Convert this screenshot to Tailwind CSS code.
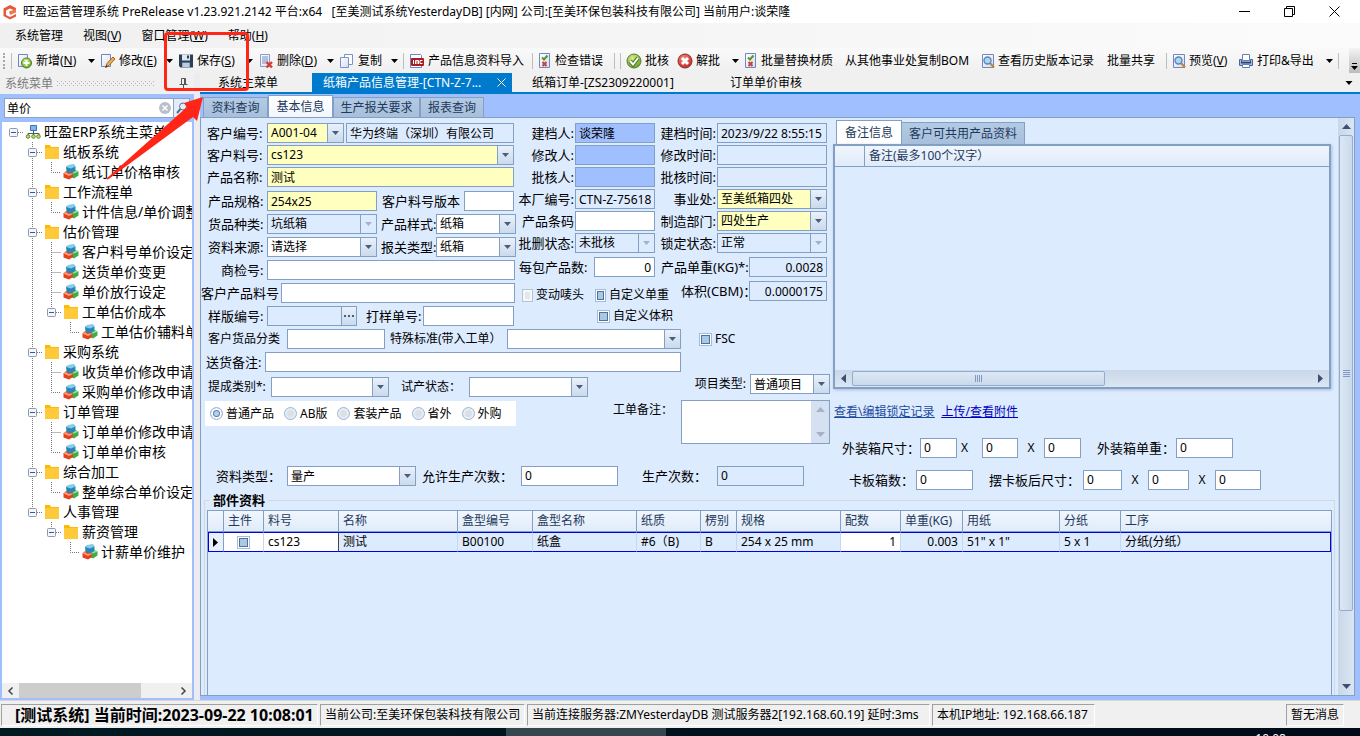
<!DOCTYPE html>
<html lang="zh-CN">

<head>
    <meta charset="UTF-8">
    <meta name="viewport" content="width=device-width, initial-scale=1.0">
    <title>旺盈运营管理系统</title>
    <script src="https://cdn.jsdelivr.net/npm/@tailwindcss/browser@4"></script>
</head>

<body class="bg-[#f0f0f0] text-black text-xs leading-4 font-['Noto_Sans','Noto_Sans_CJK_SC',sans-serif]">
    <!-- Shared icons -->
    <svg class="absolute size-0" xmlns="http://www.w3.org/2000/svg">
        <defs>
            <linearGradient id="gPaper" x1="0" y1="0" x2="1" y2="1">
                <stop offset="0" stop-color="#fff" />
                <stop offset="1" stop-color="#d3def2" />
            </linearGradient>
            <radialGradient id="gGreen" cx=".4" cy=".3" r=".8">
                <stop offset="0" stop-color="#d5ee86" />
                <stop offset="1" stop-color="#5a9a1e" />
            </radialGradient>
            <radialGradient id="gRed" cx=".4" cy=".3" r=".8">
                <stop offset="0" stop-color="#f58a82" />
                <stop offset="1" stop-color="#b81f1f" />
            </radialGradient>
        </defs>
        <symbol id="caret" viewBox="0 0 7 4"><path d="M0 0h7L3.500 4z" /></symbol>
        <symbol id="new" viewBox="0 0 16 16">
            <path d="M1.500 1.500h9v12h-9z" fill="url(#gPaper)" stroke="#6d86c0" />
            <circle cx="9.500" cy="10" r="5" fill="url(#gGreen)" stroke="#4c8220" />
            <path d="M9.500 7v6M6.500 10h6" stroke="#fff" stroke-width="2" />
        </symbol>
        <symbol id="edit" viewBox="0 0 16 16">
            <path d="M1.500 1.500h9v12h-9z" fill="url(#gPaper)" stroke="#6d86c0" />
            <path d="M5.500 14.500l1.500-4 6-6.500 2 2-6 6.500z" fill="#f2b04c" stroke="#9a6420" />
            <path d="M5.500 14.500l1-2.500 1.500 1.500z" fill="#333" />
        </symbol>
        <symbol id="save" viewBox="0 0 16 16">
            <path d="M1 1.500h14v13H2.500L1 13z" fill="#2b4055" />
            <path d="M4 1.500h8v6H4z" fill="#dfe8f2" />
            <path d="M9 2.500h2v3H9z" fill="#2b4055" />
            <path d="M4 9.500h8v5H4z" fill="#8fa9c4" />
            <path d="M5 11h6M5 13h6" stroke="#e9f0f7" />
        </symbol>
        <symbol id="del" viewBox="0 0 16 16">
            <path d="M2.500 1.500h9v12h-9z" fill="url(#gPaper)" stroke="#8c9cc6" />
            <path d="M4 4h6M4 6h6M4 8h6M4 10h4" stroke="#7b8fbd" />
            <path d="M8.500 9l5.500 5.500M14 9l-5.500 5.500" stroke="#d23c32" stroke-width="2.400" />
        </symbol>
        <symbol id="copy" viewBox="0 0 16 16">
            <path d="M5.500 1.500h8v10h-8z" fill="#fff" stroke="#7d92c8" />
            <path d="M1.500 4.500h8v10h-8z" fill="url(#gPaper)" stroke="#7d92c8" />
        </symbol>
        <symbol id="imc" viewBox="0 0 16 16">
            <path d="M1.500 1.500h10l1 1v12h-11z" fill="#fff" stroke="#6d86c0" />
            <rect x="2" y="5" width="13" height="8" rx="1" fill="#a51f22" />
            <path d="M4.500 7v4M6.500 11V7.500h3V11M8 7.500V11M13.500 7.500h-2.500v3h2.500" fill="none" stroke="#fff" />
        </symbol>
        <symbol id="check" viewBox="0 0 14 16">
            <path d="M1.500 .5h10v14h-10z" fill="url(#gPaper)" stroke="#7188c0" />
            <path d="M4 4.500l2 2 3.500-4" fill="none" stroke="#5d9427" stroke-width="2" />
            <path d="M4.500 9l4 4M8.500 9l-4 4" stroke="#c8433c" stroke-width="2" />
        </symbol>
        <symbol id="ok" viewBox="0 0 16 16">
            <circle cx="8" cy="8" r="7" fill="url(#gGreen)" stroke="#5c7d37" />
            <path d="M4 8l3 3.500 5-6.500" fill="none" stroke="#4f7a20" stroke-width="4" />
            <path d="M4 8l3 3.500 5-6.500" fill="none" stroke="#fff" stroke-width="2" />
        </symbol>
        <symbol id="no" viewBox="0 0 16 16">
            <circle cx="8" cy="8" r="7" fill="url(#gRed)" stroke="#93282a" />
            <path d="M5 5l6 6M11 5l-6 6" stroke="#fff" stroke-width="3" />
        </symbol>
        <symbol id="look" viewBox="0 0 14 16">
            <path d="M1.500 1.500h11v13h-11z" fill="url(#gPaper)" stroke="#7188c0" />
            <path d="M9 10l4 4.500" stroke="#c98132" stroke-width="2" />
            <circle cx="6.500" cy="7.500" r="3.500" fill="#a9d8f5" stroke="#5f86b5" stroke-width="1.400" />
        </symbol>
        <symbol id="print" viewBox="0 0 16 16">
            <path d="M4.500 1.500h7v6h-7z" fill="#fff" stroke="#6480b8" />
            <path d="M1.500 6.500h2v3h9v-3h2v6h-13z" fill="#a9bde0" stroke="#4a64a0" />
            <path d="M3 9.500h10" stroke="#2f4270" stroke-width="2" />
            <path d="M4.500 11.500h7v3h-7z" fill="#fff" stroke="#6480b8" />
        </symbol>
        <symbol id="root" viewBox="0 0 16 16">
            <path d="M5.500 1.500h6v5h-6z" fill="#7db7ef" stroke="#3a73b4" />
            <path d="M8.500 7v4M3 11V9.500h11V11" fill="none" stroke="#555" />
            <circle cx="3" cy="12.500" r="1.800" fill="#b9dc72" stroke="#5f8a22" />
            <circle cx="8.500" cy="12.500" r="1.800" fill="#b9dc72" stroke="#5f8a22" />
            <circle cx="13.500" cy="12.500" r="1.800" fill="#b9dc72" stroke="#5f8a22" />
        </symbol>
        <symbol id="folder" viewBox="0 0 16 16">
            <path d="M1 1h5l1 2h8v12H1z" fill="#ffb900" />
            <path d="M1 4h14v11H1z" fill="#ffca3a" />
        </symbol>
        <symbol id="leaf" viewBox="0 0 16 16">
            <path d="M8.500 8l4-2L15.500 7.500v4L11 14.500 8 13z" fill="#3fae49" />
            <path d="M8.500 8l4-2 3 1.500L11 9.500z" fill="#9be08a" />
            <path d="M.5 9.500l2-2L6 7l4 2v4l-4 2.500-5.500-2z" fill="#e2421f" />
            <path d="M.5 9.500L3 8l2.500 2L9 9l1 1-4 2z" fill="#ff9a6c" />
            <path d="M3 3l2.500-2L11 .500l1.500 2V7L8 9.500 3.500 8z" fill="#2a86b4" />
            <path d="M3 3l2.500-2L11 .500l1.500 2L8 4.500z" fill="#7fd0ee" />
        </symbol>
        <!-- Tree guides, one cell each -->
        <symbol id="g-line" viewBox="0 0 19 20"><path d="M9.500 0v20" stroke="#777" stroke-dasharray="1 1" /></symbol>
        <symbol id="g-tee" viewBox="0 0 19 20"><path d="M9.500 0v20M9.500 10.500h10" stroke="#777" stroke-dasharray="1 1" /></symbol>
        <symbol id="g-end" viewBox="0 0 19 20"><path d="M9.500 0v10.500h10" fill="none" stroke="#777" stroke-dasharray="1 1" /></symbol>
        <symbol id="g-box" viewBox="0 0 19 20">
            <path d="M14 10.500h5" stroke="#777" stroke-dasharray="1 1" />
            <rect x="5.500" y="6.500" width="8" height="8" rx="1" fill="#f4f6fa" stroke="#8e9aab" />
            <path d="M7 10.500h5" stroke="#3656b0" />
        </symbol>
        <symbol id="g-mid" viewBox="0 0 19 20">
            <path d="M9.500 0v20" stroke="#777" stroke-dasharray="1 1" />
            <use href="#g-box" width="19" height="20" />
        </symbol>
        <symbol id="g-last" viewBox="0 0 19 20">
            <path d="M9.500 0v6" stroke="#777" stroke-dasharray="1 1" />
            <use href="#g-box" width="19" height="20" />
        </symbol>
    </svg>

    <div class="relative flex min-h-screen flex-col">
        <!-- Title bar -->
        <header class="flex h-[23px] items-center bg-white">
            <svg class="ml-[2px] size-4" viewBox="0 0 16 16">
                <path d="M8 1l6 3v3L8 4.500 4 6.500v4.500l4 2 6-3v2.500L8 15.500 1.500 12V4.500z" fill="#e8573a" />
                <path d="M7 7.500l7-2.500v3.500L8 11z" fill="#f07a4c" />
            </svg>
            <h1 class="ml-[5px] whitespace-pre">旺盈运营管理系统 PreRelease v1.23.921.2142 平台:x64   [至美测试系统YesterdayDB] [内网] 公司:[至美环保包装科技有限公司] 当前用户:谈荣隆</h1>
            <div class="ml-auto flex h-full items-center">
                <button class="flex w-[45px] justify-center" aria-label="最小化"><svg class="size-[11px]" viewBox="0 0 11 11"><path d="M0 5.500h11" stroke="#000" /></svg></button>
                <button class="flex w-[45px] justify-center" aria-label="还原"><svg class="size-[11px]" viewBox="0 0 11 11"><path d="M.5 2.500h8v8h-8zM2.500 2.500v-2h8v8h-2" fill="none" stroke="#000" /></svg></button>
                <button class="mr-[3px] flex w-[45px] justify-center" aria-label="关闭"><svg class="size-[11px]" viewBox="0 0 11 11"><path d="M.5.5l10 10M10.500.5l-10 10" stroke="#000" /></svg></button>
            </div>
        </header>

        <!-- Menu bar -->
        <nav class="flex h-[25px] items-center gap-5 bg-linear-to-r from-[#f0f0f0] to-[#fbfbfb] pl-[15px]">
            <button>系统管理</button>
            <button>视图(<u>V</u>)</button>
            <button>窗口管理(<u>W</u>)</button>
            <button>帮助(<u>H</u>)</button>
        </nav>

        <!-- Toolbar -->
        <div class="flex h-[25px] items-center gap-[5px] bg-linear-to-b from-[#fafafa] to-[#efefef] pl-[3px] whitespace-nowrap [&_button]:flex [&_button]:items-center [&_button]:gap-[3px]">
            <span class="h-4 border-l-2 border-dotted border-[#a8a8a8]"></span>
            <span class="ml-px h-4 w-px bg-[#bdbdbd]"></span>
            <div class="flex w-[78px] items-center justify-between">
                <button><svg class="size-4"><use href="#new" /></svg><span>新增(<u>N</u>)</span></button>
                <svg class="h-1 w-[7px]"><use href="#caret" /></svg>
            </div>
            <div class="flex w-[73px] items-center justify-between">
                <button><svg class="size-4"><use href="#edit" /></svg><span>修改(<u>E</u>)</span></button>
                <svg class="h-1 w-[7px]"><use href="#caret" /></svg>
            </div>
            <div class="flex w-[75px] items-center justify-between">
                <button><svg class="size-4"><use href="#save" /></svg><span>保存(<u>S</u>)</span></button>
                <svg class="h-1 w-[7px]"><use href="#caret" /></svg>
            </div>
            <div class="flex w-[76px] items-center justify-between">
                <button><svg class="size-4"><use href="#del" /></svg><span>删除(<u>D</u>)</span></button>
                <svg class="h-1 w-[7px]"><use href="#caret" /></svg>
            </div>
            <div class="flex w-[59px] items-center justify-between">
                <button><svg class="size-4"><use href="#copy" /></svg>复制</button>
                <svg class="h-1 w-[7px]"><use href="#caret" /></svg>
            </div>
            <span class="h-4 w-px bg-[#bdbdbd]"></span>
            <button class="w-[118px]"><svg class="size-4"><use href="#imc" /></svg>产品信息资料导入</button>
            <span class="h-4 w-px bg-[#bdbdbd]"></span>
            <button class="w-[71px]"><svg class="h-4 w-[14px]"><use href="#check" /></svg>检查错误</button>
            <span class="h-4 w-px bg-[#bdbdbd]"></span>
            <span class="h-4 w-px bg-[#bdbdbd]"></span>
            <button class="w-[46px]"><svg class="size-4"><use href="#ok" /></svg>批核</button>
            <div class="flex w-[62px] items-center justify-between">
                <button><svg class="size-4"><use href="#no" /></svg>解批</button>
                <svg class="h-1 w-[7px]"><use href="#caret" /></svg>
            </div>
            <button class="w-[96px]"><svg class="h-4 w-[14px]"><use href="#check" /></svg>批量替换材质</button>
            <button class="w-[131px]">从其他事业处复制BOM</button>
            <button class="w-[121px]"><svg class="h-4 w-[14px]"><use href="#look" /></svg>查看历史版本记录</button>
            <button class="w-[54px]">批量共享</button>
            <span class="h-4 w-px bg-[#bdbdbd]"></span>
            <button class="w-[61px]"><svg class="h-4 w-[14px]"><use href="#look" /></svg><span>预览(<u>V</u>)</span></button>
            <div class="flex w-[95px] items-center justify-between">
                <button><svg class="size-4"><use href="#print" /></svg>打印&amp;导出</button>
                <svg class="h-1 w-[7px]"><use href="#caret" /></svg>
            </div>
            <span class="h-4 w-px bg-[#bdbdbd]"></span>
            <div class="ml-auto flex h-full w-[11px] flex-col items-center justify-end gap-[2px] bg-linear-to-b from-[#f4f4f4] to-[#bcbcbc] pb-[3px]">
                <span class="h-px w-[5px] bg-black"></span>
                <svg class="h-1 w-[7px]"><use href="#caret" /></svg>
            </div>
        </div>

        <div class="flex flex-1">
            <!-- Sidebar -->
            <aside class="flex w-[194px] shrink-0 flex-col">
                <div class="flex h-[21px] items-center gap-1 pl-[5px] text-[#7a7a7a]">
                    <span>系统菜单</span>
                    <svg class="h-[5px] w-[98px]"><path d="M0 .5h98M0 4.500h98" stroke="#b0b0b0" stroke-dasharray="1 3" /><path d="M2 2.500h96" stroke="#b0b0b0" stroke-dasharray="1 3" /></svg>
                    <svg class="ml-5 h-[11px] w-[9px]" viewBox="0 0 9 11"><path d="M2.500 6V.5h4V6M5.500 1v5M.5 6.500h8M4.500 7v4" fill="none" stroke="#555" /></svg>
                </div>
                <div class="flex flex-1 flex-col border-2 border-[#a0bfff] bg-white">
                    <div class="flex bg-[#a0bfff] px-[2px] pt-[2px] pb-1">
                        <div class="flex h-5 flex-1 items-center border border-[#8aa2c4] bg-white">
                            <input type="text" value="单价" aria-label="搜索菜单" class="h-full w-[154px] px-[2px] outline-none">
                            <svg class="size-3 shrink-0" viewBox="0 0 12 12"><circle cx="6" cy="6" r="6" fill="#b7bfca" /><path d="M3.500 3.500l5 5M8.500 3.500l-5 5" stroke="#fff" stroke-width="1.500" /></svg>
                            <button class="ml-auto flex h-full w-4 items-center justify-center border-l border-[#8aa2c4] bg-[#e3ecf8]" aria-label="搜索"><svg class="size-3" viewBox="0 0 12 12"><circle cx="7" cy="4.500" r="3.500" fill="none" stroke="#56708f" /><path d="M4.500 7L1 11" stroke="#56708f" stroke-width="2" /></svg></button>
                        </div>
                    </div>
                    <ul id="tree" class="flex-1 overflow-hidden pl-[2px] text-sm leading-5 whitespace-nowrap"></ul>
                    <div class="flex h-[15px] items-center bg-[#f0f0f0]">
                        <svg class="mx-1 h-2 w-[9px]" viewBox="0 0 9 8"><path d="M6.500.5L3 4l3.500 3.500" fill="none" stroke="#444" stroke-width="1.500" /></svg>
                        <span class="h-full w-[122px] bg-[#cdcdcd]"></span>
                        <svg class="mr-1 ml-auto h-2 w-[9px]" viewBox="0 0 9 8"><path d="M2.500.5L6 4 2.500 7.500" fill="none" stroke="#444" stroke-width="1.500" /></svg>
                    </div>
                </div>
            </aside>

            <div class="w-[6px] shrink-0 bg-[#ececf0]"></div>

            <main class="flex min-w-0 flex-1 flex-col">
                <!-- Document tabs -->
                <div class="flex h-[21px] items-stretch border-b-2 border-[#007acc] pr-[7px]">
                    <button class="w-[112px] pt-px pl-[18px] text-left">系统主菜单</button>
                    <div class="flex w-[200px] items-center justify-between bg-[#007acc] pr-[6px] pl-[11px] text-white">
                        <button class="pt-px">纸箱产品信息管理-[CTN-Z-7...</button>
                        <button aria-label="关闭标签"><svg class="size-[9px]" viewBox="0 0 9 9"><path d="M.5.5l8 8M8.500.5l-8 8" stroke="#fff" /></svg></button>
                    </div>
                    <button class="w-[198px] pt-px pl-5 text-left">纸箱订单-[ZS2309220001]</button>
                    <button class="pt-px pl-5">订单单价审核</button>
                    <svg class="ml-auto h-1 w-2 self-center"><use href="#caret" /></svg>
                </div>

                <div class="flex flex-1 flex-col bg-[#a0bfff] pr-[5px] pb-1">
                    <!-- Page tabs -->
                    <div class="flex h-[23px] items-end pl-[3px] text-[#1e395b] [&_button]:border [&_button]:border-b-0 [&_button]:border-[#839fc3]">
                        <button class="h-5 w-[65px] bg-linear-to-b from-[#b3cae4] to-[#a7bfdb]">资料查询</button>
                        <button class="h-[22px] w-[65px] bg-linear-to-b from-white to-[#f2f7ff]">基本信息</button>
                        <button class="h-5 w-[87px] bg-linear-to-b from-[#b3cae4] to-[#a7bfdb]">生产报关要求</button>
                        <button class="h-5 w-16 bg-linear-to-b from-[#b3cae4] to-[#a7bfdb]">报表查询</button>
                    </div>

                    <div class="flex flex-1 border border-[#839fc3] bg-[#ddebff]">
                        <form class="flex min-w-0 flex-1 flex-col whitespace-nowrap [&_[data-combo]]:flex [&_[data-combo]]:h-5 [&_[data-combo]]:shrink-0 [&_[data-combo]]:border [&_[data-combo]]:border-[#839fc3] [&_input]:outline-none [&_input[type=text]]:h-5 [&_input[type=text]]:border [&_input[type=text]]:border-[#839fc3] [&_input[type=text]]:px-[3px] [&_select]:min-w-0 [&_select]:flex-1 [&_select]:appearance-none [&_select]:px-[3px] [&_select]:opacity-100 [&_select]:outline-none">
                            <div class="flex">
                                <div class="w-[629px] shrink-0">
                                    <div class="flex pt-[5px]">
                                        <!-- Product fields -->
                                        <div class="w-[315px] text-[13px] leading-5 [&_input]:text-xs [&_select]:text-xs">
                                            <div class="flex flex-col gap-[2px]">
                                                <div class="flex">
                                                    <label for="custNo" class="w-[66px] shrink-0 pl-[6px]">客户编号:</label>
                                                    <div data-combo class="w-[77px] bg-[#ffffbf]"><select id="custNo"><option>A001-04</option></select></div>
                                                    <input type="text" aria-label="客户名称" readonly value="华为终端（深圳）有限公司" class="ml-[2px] w-[168px]">
                                                </div>
                                                <div class="flex">
                                                    <label for="custPart" class="w-[66px] shrink-0 pl-[6px]">客户料号:</label>
                                                    <div data-combo class="w-[247px] bg-[#ffffbf]"><select id="custPart"><option>cs123</option></select></div>
                                                </div>
                                                <div class="flex">
                                                    <label for="prodName" class="w-[66px] shrink-0 pl-[6px]">产品名称:</label>
                                                    <input type="text" id="prodName" value="测试" class="w-[247px] bg-[#ffffbf]">
                                                </div>
                                            </div>
                                            <div class="mt-1 flex flex-col gap-[3px]">
                                                <div class="flex">
                                                    <label for="spec" class="w-[66px] shrink-0 pl-[7px]">产品规格:</label>
                                                    <input type="text" id="spec" value="254x25" class="w-[110px] bg-[#ffffbf]">
                                                    <label for="partVer" class="w-[87px] pl-[5px]">客户料号版本</label>
                                                    <input type="text" id="partVer" class="w-[50px] bg-white">
                                                </div>
                                                <div class="flex">
                                                    <label for="kind" class="w-[66px] shrink-0 pl-[7px]">货品种类:</label>
                                                    <div data-combo class="w-[110px]"><select id="kind" disabled><option>坑纸箱</option></select></div>
                                                    <label for="style" class="w-[59px] pl-1">产品样式:</label>
                                                    <div data-combo class="w-20 bg-white"><select id="style"><option>纸箱</option></select></div>
                                                </div>
                                                <div class="flex">
                                                    <label for="source" class="w-[66px] shrink-0 pl-[7px]">资料来源:</label>
                                                    <div data-combo class="w-[110px] bg-white"><select id="source"><option>请选择</option></select></div>
                                                    <label for="customs" class="w-[59px] pl-1">报关类型:</label>
                                                    <div data-combo class="w-20 bg-white"><select id="customs"><option>纸箱</option></select></div>
                                                </div>
                                                <div class="flex">
                                                    <label for="inspect" class="w-[66px] shrink-0 pl-5">商检号:</label>
                                                    <input type="text" id="inspect" class="w-[248px] bg-white">
                                                </div>
                                                <div class="flex">
                                                    <label for="custProd" class="w-20 shrink-0">客户产品料号</label>
                                                    <input type="text" id="custProd" class="w-[234px] bg-white">
                                                </div>
                                                <div class="flex">
                                                    <label for="sample" class="w-[66px] shrink-0 pl-[7px]">样版编号:</label>
                                                    <input type="text" id="sample" readonly class="w-[75px]">
                                                    <button type="button" aria-label="选择样版" class="-ml-px flex h-5 w-4 items-center justify-center border border-[#839fc3] bg-linear-to-b from-[#e9f1fb] to-[#cbdaec]"><svg class="h-[2px] w-[10px]"><path d="M0 1h2M4 1h2M8 1h2" stroke="#4a5d7e" stroke-width="2" /></svg></button>
                                                    <label for="proof" class="w-[66px] pl-[9px]">打样单号:</label>
                                                    <input type="text" id="proof" class="w-[91px] bg-white">
                                                </div>
                                            </div>
                                        </div>

                                        <!-- Audit fields -->
                                        <div class="w-[314px] text-[13px] leading-5 [&_input]:text-xs [&_select]:text-xs">
                                            <div class="grid grid-cols-[58px_80px_60px_110px] gap-x-[1px] gap-y-[2px] [&_label]:text-right">
                                                <label for="maker">建档人:</label>
                                                <input type="text" id="maker" readonly value="谈荣隆" class="bg-[#a0bfff]">
                                                <label for="madeAt">建档时间:</label>
                                                <input type="text" id="madeAt" readonly value="2023/9/22 8:55:15">
                                                <label for="editor">修改人:</label>
                                                <input type="text" id="editor" readonly class="bg-[#a0bfff]">
                                                <label for="editedAt">修改时间:</label>
                                                <input type="text" id="editedAt" readonly>
                                                <label for="checker">批核人:</label>
                                                <input type="text" id="checker" readonly class="bg-[#a0bfff]">
                                                <label for="checkedAt">批核时间:</label>
                                                <input type="text" id="checkedAt" readonly>
                                                <label for="factNo">本厂编号:</label>
                                                <input type="text" id="factNo" readonly value="CTN-Z-75618">
                                                <label for="dept">事业处:</label>
                                                <div data-combo class="bg-[#ffffbf]"><select id="dept"><option>至美纸箱四处</option></select></div>
                                                <label for="barcode">产品条码</label>
                                                <input type="text" id="barcode" class="bg-white">
                                                <label for="mfg">制造部门:</label>
                                                <div data-combo class="bg-[#ffffbf]"><select id="mfg"><option>四处生产</option></select></div>
                                                <label for="state">批删状态:</label>
                                                <div data-combo><select id="state" disabled><option>未批核</option></select></div>
                                                <label for="lock">锁定状态:</label>
                                                <div data-combo><select id="lock" disabled><option>正常</option></select></div>
                                            </div>
                                            <div class="mt-1 flex flex-col gap-1">
                                                <div class="flex">
                                                    <label for="perPack" class="w-[78px] pl-[3px]">每包产品数:</label>
                                                    <input type="text" id="perPack" value="0" class="w-[61px] bg-white text-right">
                                                    <label for="weight" class="w-[94px] pl-[6px]">产品单重(KG)*:</label>
                                                    <input type="text" id="weight" readonly value="0.0028" class="w-[78px] text-right">
                                                </div>
                                                <div class="flex">
                                                    <div class="flex w-[161px] items-center gap-[3px] pt-[6px] pl-[6px] text-xs leading-4 [&_label]:mr-2">
                                                        <input type="checkbox" id="mark" disabled class="size-[13px] appearance-none border border-[#b3c3d8] bg-[#e4e6ea] shadow-[inset_0_0_0_2px_#f6f7f9]">
                                                        <label for="mark">变动唛头</label>
                                                        <input type="checkbox" id="ownWeight" class="size-[13px] appearance-none border border-[#a3bbdc] bg-[#a9c8e4] shadow-[inset_0_0_0_1px_#fff,inset_0_0_0_2px_#4f7299]">
                                                        <label for="ownWeight">自定义单重</label>
                                                    </div>
                                                    <label for="volume" class="w-[72px] pl-1">体积(CBM)：</label>
                                                    <input type="text" id="volume" readonly value="0.0000175" class="w-[78px] text-right">
                                                </div>
                                                <div class="flex h-[18px] items-center gap-[3px] pl-[81px] text-xs">
                                                    <input type="checkbox" id="ownVolume" class="size-[13px] appearance-none border border-[#a3bbdc] bg-[#a9c8e4] shadow-[inset_0_0_0_1px_#fff,inset_0_0_0_2px_#4f7299]">
                                                    <label for="ownVolume">自定义体积</label>
                                                </div>
                                            </div>
                                        </div>
                                    </div>

                                    <div class="mt-[3px] flex flex-col gap-[3px] leading-5">
                                        <div class="flex items-center">
                                            <label for="custKind" class="w-[86px] pl-[7px]">客户货品分类</label>
                                            <input type="text" id="custKind" class="w-[98px] bg-white">
                                            <label for="standard" class="w-[122px] pl-[5px]">特殊标准(带入工单）</label>
                                            <div data-combo class="w-[174px] bg-white"><select id="standard"></select></div>
                                            <input type="checkbox" id="fsc" class="mr-[3px] ml-[18px] size-[13px] appearance-none border border-[#a3bbdc] bg-[#a9c8e4] shadow-[inset_0_0_0_1px_#fff,inset_0_0_0_2px_#4f7299]">
                                            <label for="fsc">FSC</label>
                                        </div>
                                        <div class="flex">
                                            <label for="shipNote" class="w-16 pl-[5px] text-[13px] leading-5">送货备注:</label>
                                            <input type="text" id="shipNote" class="w-[416px] bg-white">
                                        </div>
                                    </div>

                                    <div class="mt-[2px] flex justify-between leading-5">
                                        <div class="pt-[3px]">
                                            <div class="flex">
                                                <label for="bonus" class="w-[70px] pl-[7px]">提成类别*:</label>
                                                <div data-combo class="w-[118px] bg-white"><select id="bonus"></select></div>
                                                <label for="trial" class="w-[80px] pl-3">试产状态：</label>
                                                <div data-combo class="w-[119px] bg-white"><select id="trial"></select></div>
                                            </div>
                                            <div class="mt-1 ml-1 flex h-[25px] w-[311px] items-center gap-[3px] bg-white pl-[5px] [&_input]:size-[13px] [&_input]:appearance-none [&_input]:rounded-full [&_input]:border [&_input]:border-[#9fb7d6] [&_label]:mr-[7px]">
                                                <input type="radio" name="ptype" id="p1" checked class="bg-[#b4d0ec] shadow-[inset_0_0_0_2px_#fff,inset_0_0_0_3px_#5b7fa8]">
                                                <label for="p1">普通产品</label>
                                                <input type="radio" name="ptype" id="p2" class="bg-[#dcdfe3] shadow-[inset_0_0_0_2px_#e6eefa]">
                                                <label for="p2">AB版</label>
                                                <input type="radio" name="ptype" id="p3" class="bg-[#dcdfe3] shadow-[inset_0_0_0_2px_#e6eefa]">
                                                <label for="p3">套装产品</label>
                                                <input type="radio" name="ptype" id="p4" class="bg-[#dcdfe3] shadow-[inset_0_0_0_2px_#e6eefa]">
                                                <label for="p4">省外</label>
                                                <input type="radio" name="ptype" id="p5" class="bg-[#dcdfe3] shadow-[inset_0_0_0_2px_#e6eefa]">
                                                <label for="p5">外购</label>
                                            </div>
                                        </div>
                                        <div>
                                            <div class="flex justify-end">
                                                <label for="project" class="pr-1">项目类型:</label>
                                                <div data-combo class="w-20 bg-white"><select id="project"><option>普通项目</option></select></div>
                                            </div>
                                            <div class="mt-[6px] flex">
                                                <label for="orderNote" class="w-[68px]">工单备注：</label>
                                                <div class="flex h-11 w-[149px] border border-[#839fc3] bg-white">
                                                    <textarea id="orderNote" class="min-w-0 flex-1 resize-none outline-none"></textarea>
                                                    <div class="flex w-[18px] flex-col items-center justify-between bg-[#d5e1f0] py-[6px] text-[#a3b2c8]">
                                                        <svg class="h-[5px] w-[9px]" viewBox="0 0 9 5" fill="currentColor"><path d="M0 5h9L4.500 0z" /></svg>
                                                        <svg class="h-[5px] w-[9px]" viewBox="0 0 9 5" fill="currentColor"><path d="M0 0h9L4.500 5z" /></svg>
                                                    </div>
                                                </div>
                                            </div>
                                        </div>
                                    </div>

                                    <div class="mt-[22px] flex leading-5">
                                        <label for="dataKind" class="w-[86px] pl-[15px] text-[13px] leading-5">资料类型：</label>
                                        <div data-combo class="w-[129px] bg-white"><select id="dataKind"><option>量产</option></select></div>
                                        <label for="allowed" class="w-[105px] pl-[6px] text-[13px] leading-5">允许生产次数：</label>
                                        <input type="text" id="allowed" value="0" class="w-[97px] bg-white">
                                        <label for="made" class="w-[99px] pl-6 text-[13px] leading-5">生产次数：</label>
                                        <input type="text" id="made" readonly value="0" class="w-[87px]">
                                    </div>
                                </div>

                                <!-- Remarks -->
                                <div class="flex min-w-0 flex-1 flex-col pt-[2px] pr-[7px] pl-[3px]">
                                    <div class="flex items-end pl-[3px] text-[#1e395b] [&_button]:border [&_button]:border-b-0 [&_button]:border-[#839fc3]">
                                        <button type="button" class="h-6 w-[66px] bg-white">备注信息</button>
                                        <button type="button" class="-ml-px h-[22px] w-[124px] bg-linear-to-b from-[#b3cae4] to-[#a7bfdb]">客户可共用产品资料</button>
                                    </div>
                                    <div class="flex h-[245px] flex-col border-2 border-[#839fc3] shadow-[1px_1px_3px_#a9bdd8]">
                                        <div class="flex h-[21px] border-b border-[#839fc3] bg-linear-to-b from-[#f0f6fe] to-[#e0ebf9] leading-5 text-[#1e395b]">
                                            <span class="w-[30px] border-r border-[#839fc3]"></span>
                                            <span class="pl-1">备注(最多100个汉字）</span>
                                        </div>
                                        <div class="flex-1"></div>
                                        <div class="flex h-[17px] items-center bg-linear-to-b from-[#c9d7e8] to-[#dbe6f3] px-[6px]">
                                            <svg class="h-[9px] w-[5px]" viewBox="0 0 5 9"><path d="M5 0v9L0 4.500z" fill="#3e4f73" /></svg>
                                            <span class="ml-[6px] flex h-[15px] w-[253px] items-center justify-center gap-px rounded-xs border border-[#93add0] bg-linear-to-b from-[#dde8f5] to-[#cad9eb]">
                                                <svg class="h-[7px] w-[7px]"><path d="M.5 0v7M2.500 0v7M4.500 0v7M6.500 0v7" stroke="#7f9bc4" /></svg>
                                            </span>
                                            <svg class="ml-auto h-[9px] w-[5px]" viewBox="0 0 5 9"><path d="M0 0v9l5-4.500z" fill="#3e4f73" /></svg>
                                        </div>
                                    </div>
                                    <div class="mt-[15px] flex gap-[7px] pl-px underline">
                                        <a href="#" class="text-[#1f4b9e]">查看\编辑锁定记录</a>
                                        <a href="#" class="text-[#0000c0]">上传/查看附件</a>
                                    </div>
                                    <div class="mt-[18px] flex leading-5 [&_span]:text-center">
                                        <label for="boxL" class="w-[87px] pl-[9px] text-[13px] leading-5">外装箱尺寸：</label>
                                        <input type="text" id="boxL" value="0" class="w-[37px] border-l-0 bg-white">
                                        <span class="w-[15px]">X</span>
                                        <input type="text" aria-label="外装箱宽" value="0" class="ml-[10px] w-[36px] bg-white">
                                        <span class="w-[26px]">X</span>
                                        <input type="text" aria-label="外装箱高" value="0" class="w-[37px] bg-white">
                                        <label for="boxWeight" class="w-[95px] pl-4 text-[13px] leading-5">外装箱单重：</label>
                                        <input type="text" id="boxWeight" value="0" class="w-[57px] bg-white">
                                    </div>
                                    <div class="mt-3 flex leading-5 [&_span]:text-center">
                                        <label for="boardQty" class="w-[83px] pl-4 text-[13px] leading-5">卡板箱数：</label>
                                        <input type="text" id="boardQty" value="0" class="w-[57px] bg-white">
                                        <label for="boardL" class="w-[110px] pl-4 text-[13px] leading-5">摆卡板后尺寸：</label>
                                        <input type="text" id="boardL" value="0" class="w-[39px] bg-white">
                                        <span class="w-[26px]">X</span>
                                        <input type="text" aria-label="摆卡板后宽" value="0" class="w-[41px] bg-white">
                                        <span class="w-[26px]">X</span>
                                        <input type="text" aria-label="摆卡板后高" value="0" class="w-[46px] bg-white">
                                    </div>
                                </div>
                            </div>

                            <!-- Parts -->
                            <fieldset class="mx-[3px] mt-[2px] flex flex-1 flex-col border border-b-0 border-[#d3d9e2] px-[2px]">
                                <legend class="ml-[3px] px-[3px] text-[13px] leading-4 font-bold">部件资料</legend>
                                <div class="mt-[2px] flex-1 border border-b-0 border-[#839fc3]">
                                    <table class="w-full table-fixed border-separate border-spacing-0 [&_td]:h-5 [&_td]:border-y [&_td]:border-r [&_td]:border-y-[#0000e6] [&_td]:px-1 [&_th]:h-[21px] [&_th]:border-r [&_th]:border-b [&_th]:border-[#839fc3] [&_th]:px-1 [&_th]:text-left [&_th]:font-normal [&_th:last-child]:border-r-0">
                                        <colgroup>
                                            <col class="w-4"><col class="w-10"><col class="w-[75px]"><col class="w-[119px]"><col class="w-[75px]"><col class="w-[104px]"><col class="w-16"><col class="w-9"><col class="w-[104px]"><col class="w-[60px]"><col class="w-[62px]"><col class="w-[97px]"><col class="w-[61px]"><col>
                                        </colgroup>
                                        <thead class="bg-linear-to-b from-[#f0f6fe] to-[#e0ebf9] text-[#1e395b]">
                                            <tr>
                                                <th></th><th>主件</th><th>料号</th><th>名称</th><th>盒型编号</th><th>盒型名称</th><th>纸质</th><th>楞别</th><th>规格</th><th>配数</th><th>单重(KG)</th><th>用纸</th><th>分纸</th><th>工序</th>
                                            </tr>
                                        </thead>
                                        <tbody>
                                            <tr>
                                                <td class="border-l border-l-[#0000e6] border-r-[#839fc3] bg-[#e8f0fb]"><svg class="h-[9px] w-[5px]" viewBox="0 0 5 9"><path d="M0 0l5 4.500L0 9z" /></svg></td>
                                                <td class="border-r-[#c4d8f2] bg-white"><input type="checkbox" aria-label="主件" class="mx-auto block size-[13px] appearance-none border border-[#a3bbdc] bg-[#a9c8e4] shadow-[inset_0_0_0_1px_#fff,inset_0_0_0_2px_#4f7299]"></td>
                                                <td class="border-r-[#444] bg-white">cs123</td>
                                                <td class="border-r-[#c4d8f2]">测试</td>
                                                <td class="border-r-[#c4d8f2]">B00100</td>
                                                <td class="border-r-[#c4d8f2]">纸盒</td>
                                                <td class="border-r-[#c4d8f2]">#6（B)</td>
                                                <td class="border-r-[#c4d8f2]">B</td>
                                                <td class="border-r-[#c4d8f2]">254 x 25 mm</td>
                                                <td class="border-r-[#c4d8f2] bg-white text-right">1</td>
                                                <td class="border-r-[#c4d8f2] text-right">0.003</td>
                                                <td class="border-r-[#c4d8f2]">51" x 1"</td>
                                                <td class="border-r-[#c4d8f2]">5 x 1</td>
                                                <td class="border-r-[#0000e6]">分纸(分纸）</td>
                                            </tr>
                                        </tbody>
                                    </table>
                                </div>
                            </fieldset>
                        </form>

                        <!-- Vertical scrollbar -->
                        <div class="flex w-4 shrink-0 flex-col items-center bg-linear-to-r from-[#c9d7e8] to-[#dbe6f3] py-[6px]">
                            <svg class="h-[5px] w-[9px]" viewBox="0 0 9 5"><path d="M0 5h9L4.500 0z" fill="#3e4f73" /></svg>
                            <span class="mt-[6px] flex h-[476px] w-[14px] items-center justify-center rounded-xs border border-[#93add0] bg-linear-to-r from-[#dde8f5] to-[#cad9eb]">
                                <svg class="h-[7px] w-[7px]"><path d="M0 .5h7M0 2.500h7M0 4.500h7M0 6.500h7" stroke="#7f9bc4" /></svg>
                            </span>
                            <svg class="mt-auto h-[5px] w-[9px]" viewBox="0 0 9 5"><path d="M0 0h9L4.500 5z" fill="#3e4f73" /></svg>
                        </div>
                    </div>
                </div>
            </main>
        </div>

        <!-- Status bar -->
        <footer class="flex h-7 items-center gap-[2px] border-t border-[#d7d7d7] pl-px leading-5 whitespace-nowrap [&_span]:h-[22px] [&_span]:border [&_span]:border-t-[#a0a0a0] [&_span]:border-r-white [&_span]:border-b-white [&_span]:border-l-[#a0a0a0]">
            <span class="w-[317px] pl-[13px] text-base leading-5 font-bold whitespace-pre">[测试系统] 当前时间:2023-09-22 10:08:01</span>
            <span class="w-[205px] pl-1">当前公司:至美环保包装科技有限公司</span>
            <span class="w-[403px] pl-1">当前连接服务器:ZMYesterdayDB 测试服务器2[192.168.60.19] 延时:3ms</span>
            <span class="w-[163px] pl-1">本机IP地址: 192.168.66.187</span>
            <span class="mr-4 ml-auto w-[58px] pl-1">暂无消息</span>
        </footer>

        <!-- Taskbar -->
        <div class="flex h-2 overflow-hidden bg-linear-to-r from-[#001a22] to-[#000a18]">
            <div class="ml-[506px] w-[160px] bg-[#36464f]"></div>
            <time class="mr-[74px] ml-auto pt-[3px] leading-4 text-white">10:08</time>
        </div>

        <!-- Highlight on the save button -->
        <div class="pointer-events-none absolute top-[32px] left-[164px] h-[59px] w-[85px] rounded-sm border-3 border-[#ff2517]"></div>
        <svg class="pointer-events-none absolute top-[96px] left-[104px] h-[86px] w-[102px]" viewBox="104 96 102 86"><path d="M203 97l-19 6 3 4-81 72 2 .5L193 117l4 4z" fill="#ff2517" /></svg>
    </div>

    <script>
        // guides: one letter per cell (s space, l line, t tee, e end, b/m/u boxes)
        const nodes = [
            ['b', 'root', '旺盈ERP系统主菜单'],
            ['sm', 'folder', '纸板系统'],
            ['sle', 'leaf', '纸订单价格审核'],
            ['sm', 'folder', '工作流程单'],
            ['sle', 'leaf', '计件信息/单价调整'],
            ['sm', 'folder', '估价管理'],
            ['slt', 'leaf', '客户料号单价设定'],
            ['slt', 'leaf', '送货单价变更'],
            ['slt', 'leaf', '单价放行设定'],
            ['slu', 'folder', '工单估价成本'],
            ['slse', 'leaf', '工单估价辅料单价'],
            ['sm', 'folder', '采购系统'],
            ['slt', 'leaf', '收货单价修改申请'],
            ['sle', 'leaf', '采购单价修改申请'],
            ['sm', 'folder', '订单管理'],
            ['slt', 'leaf', '订单单价修改申请'],
            ['sle', 'leaf', '订单单价审核'],
            ['sm', 'folder', '综合加工'],
            ['sle', 'leaf', '整单综合单价设定'],
            ['su', 'folder', '人事管理'],
            ['ssu', 'folder', '薪资管理'],
            ['ssse', 'leaf', '计薪单价维护']
        ];
        const guides = { s: '', l: '#g-line', t: '#g-tee', e: '#g-end', b: '#g-box', m: '#g-mid', u: '#g-last' };

        document.getElementById('tree').innerHTML = nodes.map(([cells, icon, text]) => `
            <li class="flex h-5 items-center">
                ${[...cells].map(c => `<svg class="h-5 w-[19px] shrink-0"><use href="${guides[c]}" /></svg>`).join('')}
                <svg class="mr-[3px] ml-[2px] size-4 shrink-0"><use href="#${icon}" /></svg>${text}
            </li>`).join('');

        // drop-down arrow at the end of every combo
        document.querySelectorAll('[data-combo]').forEach(combo => {
            const color = combo.querySelector('select').disabled ? 'fill-[#a3b2c8]' : 'fill-[#4a5d7e]';
            const face = combo.querySelector('select').disabled ? 'bg-[#ddebff]' : 'bg-linear-to-b from-[#e9f1fb] to-[#cbdaec]';
            combo.insertAdjacentHTML('beforeend', `
                <span class="flex w-4 shrink-0 items-center justify-center border-l border-[#839fc3] ${face}">
                    <svg class="h-1 w-[7px] ${color}"><use href="#caret" /></svg>
                </span>`);
        });
    </script>
</body>

</html>
